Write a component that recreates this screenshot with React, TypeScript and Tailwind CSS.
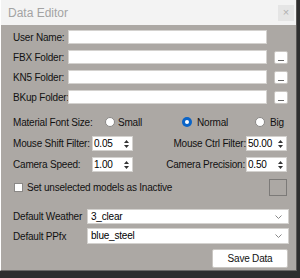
import React from 'react'

const font = { fontFamily: '"Liberation Sans", Arial, sans-serif' }

function TextBox({ className = '' }: { className?: string }) {
  return <div className={`h-[14px] bg-white border border-[#d4d2cf] ${className}`} />
}

function DotsButton() {
  return (
    <div className="w-[14px] h-[13px] bg-white border border-[#c9c6c2] rounded-[2px] flex items-end justify-center pb-[2px]">
      <span className="block w-[6px] h-[1px] bg-[#666]" />
    </div>
  )
}

function Spin({ value }: { value: string }) {
  return (
    <div className="w-[41px] h-[15px] shrink-0 bg-white border border-[#d4d2cf] flex items-center">
      <span className="flex-1 pl-[1px] leading-none text-black">{value}</span>
      <div className="w-[9px] h-full flex flex-col items-center justify-center gap-[2px] mr-[1px]">
        <svg width="5" height="3" viewBox="0 0 5 3"><path d="M0 3 L2.5 0 L5 3 Z" fill="#333" /></svg>
        <svg width="5" height="3" viewBox="0 0 5 3"><path d="M0 0 L2.5 3 L5 0 Z" fill="#333" /></svg>
      </div>
    </div>
  )
}

function Radio({ checked = false }: { checked?: boolean }) {
  return checked ? (
    <span className="w-[10px] h-[10px] shrink-0 rounded-full bg-[#0a64c8] flex items-center justify-center">
      <span className="w-[4px] h-[4px] rounded-full bg-white" />
    </span>
  ) : (
    <span className="w-[10px] h-[10px] shrink-0 rounded-full bg-white border border-[#8a8886]" />
  )
}

function Select({ value, className = '' }: { value: string; className?: string }) {
  return (
    <div className={`w-[202px] shrink-0 bg-white border border-[#d4d2cf] flex items-center pl-[3px] pr-[6px] ${className}`}>
      <span className="flex-1 leading-none text-black">{value}</span>
      <svg width="7" height="4" viewBox="0 0 7 4">
        <path d="M0.5 0.5 L3.5 3.5 L6.5 0.5" stroke="#888" strokeWidth="1" fill="none" />
      </svg>
    </div>
  )
}

export default function App() {
  const folders = ['FBX Folder:', 'KN5 Folder:', 'BKup Folder:']
  return (
    <div className="w-[300px] h-[278px] bg-[#2e2e2e] flex flex-col" style={font}>
      <div className="w-[297px] h-[271px] flex flex-col border-l border-l-white border-r border-r-[#5a5856] border-b border-b-[#6a6866]">
        <div className="h-[25px] shrink-0 bg-[#f3f3f3] flex items-center justify-between pl-[7px] pr-[2px]">
          <span className="text-[12px] text-[#a3a3a3]">Data Editor</span>
          <div className="w-[16px] h-[16px] bg-[#e5e5e5] flex items-center justify-center text-[11px] text-[#b0b0b0] leading-none">×</div>
        </div>
        <div className="flex-1 bg-[#aca8a4] pl-[12px] pr-[8px] pt-[5px] flex flex-col text-[10px] text-[#111] tracking-[-0.2px] whitespace-nowrap">
          <div className="flex items-center h-[14px]">
            <span className="w-[55px] shrink-0">User Name:</span>
            <TextBox className="w-[199px]" />
          </div>
          {folders.map((f) => (
            <div key={f} className="flex items-center h-[14px] mt-[6px]">
              <span className="w-[55px] shrink-0">{f}</span>
              <TextBox className="w-[199px]" />
              <span className="ml-[7px]"><DotsButton /></span>
            </div>
          ))}
          <div className="flex items-center h-[14px] mt-[11px]">
            <span className="w-[92px] shrink-0">Material Font Size:</span>
            <Radio />
            <span className="ml-[3px] w-[64px]">Small</span>
            <Radio checked />
            <span className="ml-[5px] w-[58px]">Normal</span>
            <Radio />
            <span className="ml-[5px]">Big</span>
          </div>
          <div className="flex items-center h-[15px] mt-[7px]">
            <span className="w-[79px] shrink-0">Mouse Shift Filter:</span>
            <Spin value="0.05" />
            <div className="flex-1 flex items-center justify-end pr-[1px]">
              <span>Mouse Ctrl Filter:</span>
              <Spin value="50.00" />
            </div>
          </div>
          <div className="flex items-center h-[15px] mt-[6px]">
            <span className="w-[79px] shrink-0">Camera Speed:</span>
            <Spin value="1.00" />
            <div className="flex-1 flex items-center justify-end pr-[1px]">
              <span className="mr-[1px]">Camera Precision:</span>
              <Spin value="0.50" />
            </div>
          </div>
          <div className="flex items-center h-[17px] mt-[7px]">
            <span className="w-[9px] h-[9px] bg-white border border-[#8a8886] ml-[1px]" />
            <span className="ml-[4px] flex-1">Set unselected models as Inactive</span>
            <span className="w-[18px] h-[17px] border border-[#7c7a78] mr-[1px]" />
          </div>
          <div className="flex items-center h-[15px] mt-[13px]">
            <span className="w-[74px] shrink-0">Default Weather</span>
            <Select value="3_clear" className="h-[15px]" />
          </div>
          <div className="flex items-center h-[16px] mt-[4px]">
            <span className="w-[74px] shrink-0">Default PPfx</span>
            <Select value="blue_steel" className="h-[16px]" />
          </div>
          <div className="flex justify-end mt-[5px]">
            <div className="w-[76px] h-[19px] bg-white border border-[#c9c6c2] rounded-[2px] flex items-center justify-center">
              Save Data
            </div>
          </div>
        </div>
      </div>
    </div>
  )
}
